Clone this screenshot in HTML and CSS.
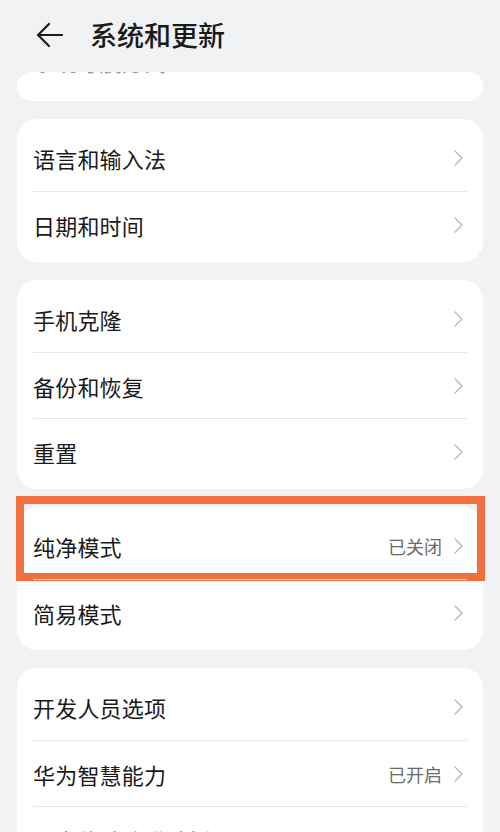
FILE: index.html
```html
<!DOCTYPE html>
<html>
<head>
    <meta charset="utf-8">
    <title>系统和更新</title>
    <link rel="stylesheet" href="styles.css">
</head>
<body>
    <div class="header">
        <svg class="back" width="28" height="26" viewBox="0 0 28 26">
            <path d="M26 13H2M13 2L2 13l11 11" fill="none" stroke="#1a1a1a" stroke-width="2.2" stroke-linecap="round" stroke-linejoin="round"/>
        </svg>
        <h1>系统和更新</h1>
    </div>

    <div class="main">
        <div class="card card-top">
            <div class="row"><span class="label">系统导航方式</span></div>
        </div>

        <div class="card">
            <div class="row"><span class="label">语言和输入法</span><svg class="chev" width="9" height="16" viewBox="0 0 9 16"><path d="M1 1l7 7-7 7"/></svg></div>
            <div class="row"><span class="label">日期和时间</span><svg class="chev" width="9" height="16" viewBox="0 0 9 16"><path d="M1 1l7 7-7 7"/></svg></div>
        </div>

        <div class="card">
            <div class="row"><span class="label">手机克隆</span><svg class="chev" width="9" height="16" viewBox="0 0 9 16"><path d="M1 1l7 7-7 7"/></svg></div>
            <div class="row"><span class="label">备份和恢复</span><svg class="chev" width="9" height="16" viewBox="0 0 9 16"><path d="M1 1l7 7-7 7"/></svg></div>
            <div class="row"><span class="label">重置</span><svg class="chev" width="9" height="16" viewBox="0 0 9 16"><path d="M1 1l7 7-7 7"/></svg></div>
        </div>

        <div class="card">
            <div class="row">
                <span class="label">纯净模式</span>
                <span class="value">已关闭</span><svg class="chev" width="9" height="16" viewBox="0 0 9 16"><path d="M1 1l7 7-7 7"/></svg>
                <div class="mark"></div>
            </div>
            <div class="row"><span class="label">简易模式</span><svg class="chev" width="9" height="16" viewBox="0 0 9 16"><path d="M1 1l7 7-7 7"/></svg></div>
        </div>

        <div class="card">
            <div class="row"><span class="label">开发人员选项</span><svg class="chev" width="9" height="16" viewBox="0 0 9 16"><path d="M1 1l7 7-7 7"/></svg></div>
            <div class="row"><span class="label">华为智慧能力</span><span class="value">已开启</span><svg class="chev" width="9" height="16" viewBox="0 0 9 16"><path d="M1 1l7 7-7 7"/></svg></div>
            <div class="row"><span class="label">用户体验改进计划</span><svg class="chev" width="9" height="16" viewBox="0 0 9 16"><path d="M1 1l7 7-7 7"/></svg></div>
        </div>
    </div>
</body>
</html>
```

FILE: styles.css
```css
html, body {
    margin: 0;
    height: 832px;
    overflow: hidden;
}
body {
    background-color: #f1f2f4;
    font-family: "Noto Sans CJK SC", "Noto Sans", sans-serif;
    color: #1a1a1a;
}
.header {
    height: 72px;
    display: flex;
    align-items: center;
    padding-left: 36px;
    box-sizing: border-box;
}
.back {
    display: block;
    margin-top: -2px;
}
.header h1 {
    margin: -3px 0 0 26px;
    font-size: 27px;
    font-weight: 500;
    line-height: 1;
}
.main {
    overflow: hidden;
    height: 760px;
    padding: 0 17px;
}
.card {
    background-color: #fff;
    border-radius: 20px;
    padding: 6px 0 5px;
    margin-bottom: 18px;
}
.card-top {
    height: 29px;
    padding: 0;
    border-radius: 16px;
    margin-bottom: 18px;
}
.card-top .row {
    height: 29px;
    align-items: flex-start;
}
.card-top .label {
    margin-top: -27px;
    color: #9a9a9a;
}
.row {
    position: relative;
    display: flex;
    align-items: center;
    height: 66px;
    margin: 0 16px;
    box-sizing: border-box;
}
.row + .row {
    border-top: 1.5px solid #e6e6e6;
}
.label {
    flex: 1;
    font-size: 22px;
    letter-spacing: 0.2px;
}
.value {
    font-size: 18px;
    color: #6a6a6a;
    margin-right: 12px;
}
.chev {
    display: block;
    margin-right: 4px;
}
.chev path {
    fill: none;
    stroke: #bdbdbd;
    stroke-width: 1.5;
    stroke-linecap: round;
    stroke-linejoin: round;
}
.mark {
    position: absolute;
    left: -17px;
    right: -18px;
    top: -17px;
    bottom: -2px;
    border: 8px solid #f2703f;
}
```
